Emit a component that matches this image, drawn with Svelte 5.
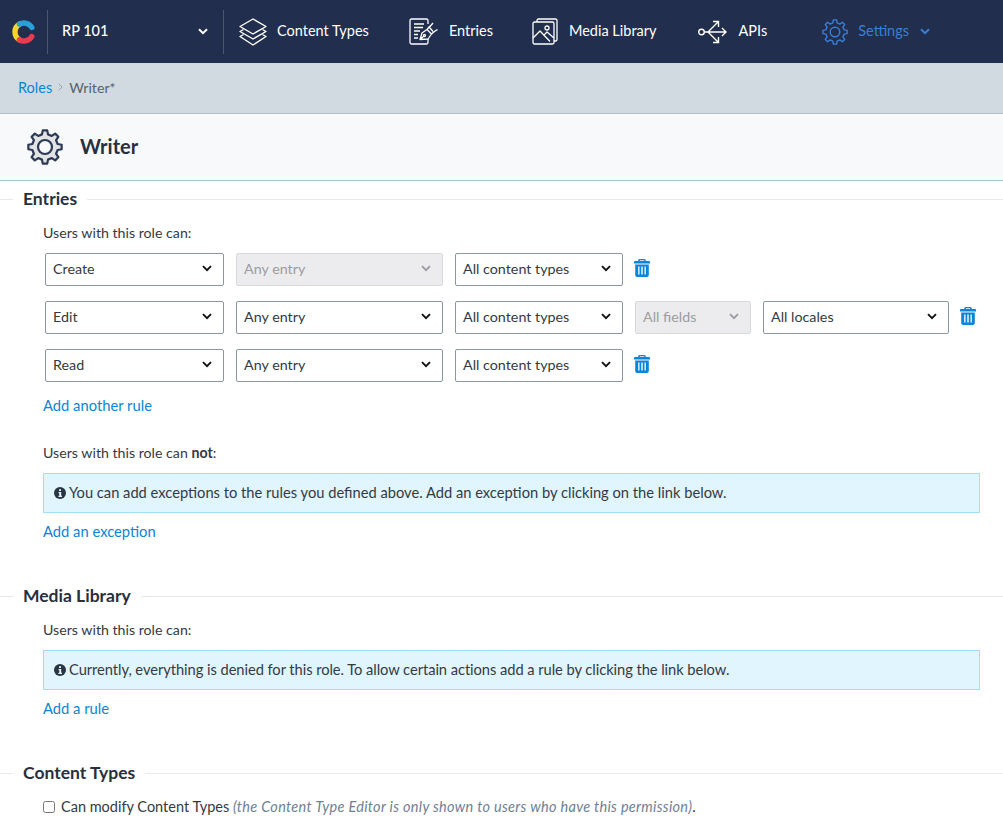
<script>
  function gear(cx, cy, R, r, teeth) {
    const pts = [];
    const step = (Math.PI * 2) / teeth;
    for (let i = 0; i < teeth; i++) {
      const a = i * step - Math.PI / 2;
      const w = step * 0.17, s = step * 0.3;
      const list = [[a - s, r], [a - w, R], [a + w, R], [a + s, r]];
      for (const [t, d] of list) pts.push((cx + Math.cos(t) * d).toFixed(2) + ' ' + (cy + Math.sin(t) * d).toFixed(2));
    }
    return 'M' + pts.join('L') + 'Z';
  }
  const bigGear = gear(20, 20, 16.8, 13, 8);
  const navGear = gear(14, 14, 12.2, 9.3, 8);

  const rows = [
    { w: [179, 207, 168], v: ['Create', 'Any entry', 'All content types'], dis: [false, true, false] },
    { w: [179, 207, 168, 116, 186], v: ['Edit', 'Any entry', 'All content types', 'All fields', 'All locales'], dis: [false, false, false, true, false] },
    { w: [179, 207, 168], v: ['Read', 'Any entry', 'All content types'], dis: [false, false, false] }
  ];
</script>

<div class="page">
  <nav class="nav">
    <svg class="logo" width="24" height="26" viewBox="0 0 24 26" fill="none" stroke-width="5.400" stroke-linecap="round">
      <path d="M7.500 20.800A9 9 0 0 1 7.500 5.200" stroke="#f6d32d" />
      <path d="M7.500 5.200A9 9 0 0 1 19.800 8.500" stroke="#2a9fd8" />
      <path d="M19.800 17.500A9 9 0 0 1 7.500 20.800" stroke="#ee3a4e" />
    </svg>
    <div class="space">
      <span>RP 101</span>
      <svg class="chev" width="10" height="7" viewBox="0 0 10 7"><path d="M1 1.200l4 4 4-4" fill="none" stroke="currentColor" stroke-width="2" /></svg>
    </div>

    <a class="item types">
      <svg width="28" height="28" viewBox="0 0 28 28" fill="none" stroke="#fff" stroke-width="1.400" stroke-linejoin="round">
        <path d="M14 1L27 8.500 14 16 1 8.500Z" />
        <path d="M4.500 11.500L1 13.500 14 21 27 13.500 23.500 11.500" />
        <path d="M4.500 16.500L1 18.500 14 27 27 18.500 23.500 16.500" />
      </svg>
      <span>Content Types</span>
    </a>
    <a class="item entries">
      <svg width="30" height="27" viewBox="0 0 30 27" fill="none" stroke="#fff" stroke-width="1.300" stroke-linejoin="round">
        <path d="M19 6V2.500A1.500 1.500 0 0 0 17.500 1H2.500A1.500 1.500 0 0 0 1 2.500v22A1.500 1.500 0 0 0 2.500 26h15a1.500 1.500 0 0 0 1.500-1.500V21" />
        <path d="M5 6h10M5 9.500h9M5 13h6M5 16.500h4M5 20h4" />
        <path d="M11 21.500l2-6.500 5-3.500 4.500 4.500-3.500 5zM11 21.500l4-3.500M18 11.500l3-3.500M22.500 16l3.500-3M20.500 9.500l3.500 4M24 5l-3 3.500M28.500 11.500l-3 2" />
        <circle cx="15.500" cy="17.500" r="1" />
      </svg>
      <span>Entries</span>
    </a>
    <a class="item media">
      <svg width="27" height="27" viewBox="0 0 27 27" fill="none" stroke="#fff" stroke-width="1.300" stroke-linejoin="round">
        <rect x="1" y="4" width="21" height="22" rx="1.500" />
        <path d="M5 4V2.500A1.500 1.500 0 0 1 6.500 1h17A1.500 1.500 0 0 1 25 2.500v19a1.500 1.500 0 0 1-1.500 1.500H22" />
        <path d="M1 20l7-7 10 10.500M12 17l3-3 7 6" />
        <circle cx="15" cy="10" r="2" />
      </svg>
      <span>Media Library</span>
    </a>
    <a class="item apis">
      <svg width="29" height="24" viewBox="0 0 29 24" fill="none" stroke="#fff" stroke-width="1.400">
        <circle cx="3.500" cy="12" r="2.800" />
        <path d="M6.500 12H28M24 8l4 4-4 4M10 12L20 2M15 1.500h5.500V7M10 12l10 10M15 22.500h5.500V17" />
      </svg>
      <span>APIs</span>
    </a>
    <a class="item settings">
      <svg width="28" height="28" viewBox="0 0 28 28" fill="none" stroke="#3a7fd5" stroke-width="1.400" stroke-linejoin="round">
        <path d={navGear} />
        <circle cx="14" cy="14" r="4.800" />
      </svg>
      <span>Settings</span>
      <svg class="chev" width="10" height="7" viewBox="0 0 10 7"><path d="M1 1.200l4 4 4-4" fill="none" stroke="currentColor" stroke-width="2" /></svg>
    </a>
  </nav>

  <div class="crumbs">
    <a class="link">Roles</a>
    <svg width="5" height="8" viewBox="0 0 5 8"><path d="M.7.700L4 4 .7 7.300" fill="none" stroke="#9aa5ad" stroke-width="1" /></svg>
    <span>Writer*</span>
  </div>

  <header class="title">
    <svg width="40" height="40" viewBox="0 0 40 40" stroke="#2d3a55" stroke-width="2.200" stroke-linejoin="round">
      <path d={bigGear} fill="#e2e3e5" />
      <circle cx="20" cy="20" r="7" fill="#f7f9fa" />
    </svg>
    <h1>Writer</h1>
  </header>

  <section class="sec entries-sec">
    <h2><span>Entries</span></h2>
    <div class="body">
      <p class="label">Users with this role can:</p>
      <div class="rules">
        {#each rows as row}
          <div class="rule">
            {#each row.v as val, i}
              <div class="select" class:disabled={row.dis[i]} style="width:{row.w[i]}px">
                <span>{val}</span>
                <svg width="10" height="7" viewBox="0 0 10 7"><path d="M1 1.200l4 4 4-4" fill="none" stroke="currentColor" stroke-width="1.900" /></svg>
              </div>
            {/each}
            <svg class="trash" width="16" height="18" viewBox="0 0 16 18" fill="#0a85d9">
              <path fill-rule="evenodd" d="M5.500 0h5a1 1 0 0 1 1 .8L12 2h3a1 1 0 0 1 1 1v1.500H0V3a1 1 0 0 1 1-1h3l.5-1.200A1 1 0 0 1 5.500 0zM6 1.200L5.600 2h4.800L10 1.200zM1.200 5.500h13.600V16a2 2 0 0 1-2 2H3.200a2 2 0 0 1-2-2zM4.200 7.500v8h1.300v-8zM7.300 7.500v8h1.400v-8zM10.500 7.500v8h1.300v-8z" />
            </svg>
          </div>
        {/each}
      </div>
      <a class="link add first">Add another rule</a>
      <p class="label not">Users with this role can <b>not</b>:</p>
      <div class="note">
        <svg width="12" height="12" viewBox="0 0 12 12"><circle cx="6" cy="6" r="6" fill="#2b3442" /><path d="M5 2.200h2v1.800H5zM4.600 5h2.600v3.700h.8v1.200H4.400V8.700h.9V6.200h-.7z" fill="#e0f4ff" /></svg>
        <span>You can add exceptions to the rules you defined above. Add an exception by clicking on the link below.</span>
      </div>
      <a class="link add">Add an exception</a>
    </div>
  </section>

  <section class="sec media-sec">
    <h2><span>Media Library</span></h2>
    <div class="body">
      <p class="label">Users with this role can:</p>
      <div class="note tight">
        <svg width="12" height="12" viewBox="0 0 12 12"><circle cx="6" cy="6" r="6" fill="#2b3442" /><path d="M5 2.200h2v1.800H5zM4.600 5h2.600v3.700h.8v1.200H4.400V8.700h.9V6.200h-.7z" fill="#e0f4ff" /></svg>
        <span>Currently, everything is denied for this role. To allow certain actions add a rule by clicking the link below.</span>
      </div>
      <a class="link add">Add a rule</a>
    </div>
  </section>

  <section class="sec types-sec">
    <h2><span>Content Types</span></h2>
    <div class="body">
      <label class="check">
        <input type="checkbox" />
        <span>Can modify Content Types <em>(the Content Type Editor is only shown to users who have this permission)</em>.</span>
      </label>
    </div>
  </section>
</div>

<style>
  :global(body) {
    margin: 0;
    background: #fff;
  }
  .page {
    width: 1003px;
    height: 834px;
    overflow: hidden;
    font-family: Lato, "Noto Sans", sans-serif;
    font-size: 14.500px;
    color: #333a44;
  }
  .nav {
    height: 63px;
    background: #212e4e;
    color: #fff;
    display: flex;
    align-items: center;
  }
  .nav span {
    padding-bottom: 2px;
  }
  .logo {
    margin-left: 12px;
    flex: none;
  }
  .space {
    margin-left: 11px;
    width: 176px;
    height: 44px;
    padding: 0 15px 0 14px;
    box-sizing: border-box;
    border-left: 1px solid #4a5670;
    display: flex;
    align-items: center;
    justify-content: space-between;
    font-weight: 500;
  }
  .item {
    display: flex;
    align-items: center;
    gap: 10px;
  }
  .types {
    border-left: 1px solid #4a5670;
    height: 44px;
    padding-left: 15px;
  }
  .entries { margin-left: 40px; }
  .media { margin-left: 39px; }
  .apis { margin-left: 41px; gap: 12px; }
  .settings { margin-left: 54px; color: #3a7fd5; gap: 9px; }
  .settings .chev { margin-left: 2px; }
  .crumbs {
    height: 51px;
    box-sizing: border-box;
    background: #d0dae0;
    padding: 0 0 2px 18px;
    display: flex;
    align-items: center;
    gap: 6px;
    border-bottom: 1px solid #b5c0c6;
    color: #566270;
  }
  .crumbs span {
    font-size: 14.200px;
  }
  .link {
    color: #0a85d9;
  }
  .title {
    height: 67px;
    box-sizing: border-box;
    background: #f7f9fb;
    border-bottom: 1px solid #a9c6d9;
    padding-left: 25px;
    display: flex;
    align-items: center;
    gap: 15px;
  }
  h1 {
    margin: 0 0 2px;
    font-size: 20px;
    font-weight: 700;
    color: #282f3e;
  }
  h2 {
    margin: 0;
    height: 18px;
    font-size: 17.500px;
    font-weight: 700;
    color: #282f3e;
    display: flex;
    align-items: center;
    line-height: 18px;
  }
  h2::before,
  h2::after {
    content: "";
    height: 1px;
    background: #e6eaec;
  }
  h2::before {
    width: 13px;
    flex: none;
  }
  h2::after {
    flex: 1;
  }
  h2 span {
    padding: 0 10px;
  }
  .entries-sec { padding-top: 9px; }
  .media-sec { padding-top: 45px; }
  .types-sec { padding-top: 45px; }
  .body {
    padding: 16px 23px 0 43px;
  }
  .label {
    margin: -1px 0 1px;
    line-height: 20px;
    font-size: 14.200px;
  }
  .rules {
    padding: 9px 0 0 2px;
    display: flex;
    flex-direction: column;
    gap: 15px;
  }
  .rule {
    display: flex;
    align-items: flex-start;
    gap: 12px;
  }
  .select {
    height: 33px;
    box-sizing: border-box;
    border: 1px solid #8d97a2;
    border-radius: 2px;
    padding: 0 7px 2px;
    display: flex;
    align-items: center;
    justify-content: space-between;
    background: #fff;
    font-size: 14.300px;
  }
  .select svg {
    color: #111;
    margin-right: 4px;
    flex: none;
  }
  .select.disabled {
    background: #ececee;
    border-color: #d5dade;
    color: #9a9da2;
  }
  .select.disabled svg {
    color: #9a9da2;
  }
  .trash {
    margin: 6px 0 0 -1px;
    flex: none;
  }
  .add {
    display: block;
    line-height: 20px;
    font-size: 14.750px;
    margin-bottom: 1px;
  }
  .add.first {
    margin-top: 13px;
  }
  .not {
    margin-top: 28px;
  }
  .note {
    margin-top: 10px;
    height: 40px;
    box-sizing: border-box;
    background: #e0f5fe;
    border: 1px solid #a2defa;
    padding: 0 10px 2px;
    display: flex;
    align-items: center;
    gap: 3px;
    font-size: 14.700px;
  }
  .note svg {
    margin-top: 2px;
  }
  .tight span {
    letter-spacing: -0.055px;
  }
  .note + .add {
    margin-top: 8px;
  }
  .check {
    display: flex;
    align-items: center;
    gap: 6px;
    line-height: 20px;
  }
  .check input {
    margin: 0;
    width: 12px;
    height: 12px;
  }
  em {
    color: #6f8194;
    letter-spacing: 0.300px;
  }
  .types-sec .body {
    padding-top: 15px;
  }
</style>
